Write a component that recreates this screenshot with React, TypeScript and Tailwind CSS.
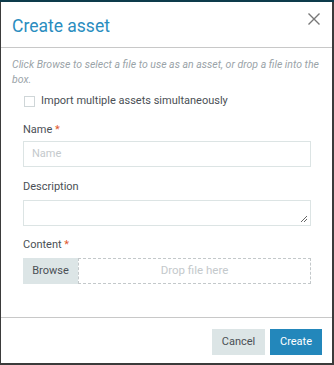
import React from "react";

export default function App() {
  return (
    <div className="w-[334px] h-[365px] bg-[#3b3b3b] flex flex-col" style={{ fontFamily: "Roboto, 'Noto Sans', sans-serif" }}>
      <div className="h-[2px] bg-[#0d3b4b] shrink-0" />
      <div className="ml-[1px] mr-[2px] h-[361px] bg-white flex flex-col">
        <div className="h-[46px] border-b border-[#c8c8c8] flex items-start justify-between pl-[11px] pr-[11px] shrink-0">
          <div className="text-[17.5px] leading-[22px] mt-[13px] text-[#2a8dc0]">Create asset</div>
          <svg width="14" height="14" viewBox="0 0 14 14" className="mt-[10px]">
            <path d="M1.5 1.5 L12.5 12.5 M12.5 1.5 L1.5 12.5" stroke="#777" strokeWidth="1.4" />
          </svg>
        </div>
        <div className="flex-1 pl-[11px] pr-[5px] pt-[9px]">
          <p className="italic text-[10.5px] leading-[15px] text-[#9aa3a8]">
            Click Browse to select a file to use as an asset, or drop a file into the box.
          </p>
          <label className="flex items-center mt-[7px] ml-[12px] gap-[6px]">
            <span className="w-[11px] h-[11px] border border-[#cfd6d8] bg-white" />
            <span className="text-[11px] leading-[14px] text-[#4a4f55]">Import multiple assets simultaneously</span>
          </label>
          <div className="ml-[11px] mr-[16px]">
            <div className="mt-[14px] text-[11px] leading-[16px] text-[#4a4f55]">
              Name <span className="text-[#e0582f]">*</span>
            </div>
            <div className="mt-[3px] h-[26px] border border-[#dce4e4] flex items-center px-[8px]">
              <span className="text-[11px] text-[#c4c9cc]">Name</span>
            </div>
            <div className="mt-[12px] text-[11px] leading-[16px] text-[#4a4f55]">Description</div>
            <div className="mt-[5px] h-[26px] border border-[#dce4e4] relative">
              <svg width="9" height="9" viewBox="0 0 9 9" className="absolute right-[2px] bottom-[2px]">
                <path d="M8 2 L2 8 M8 5 L5 8" stroke="#555" strokeWidth="0.9" />
              </svg>
            </div>
            <div className="mt-[11px] text-[11px] leading-[16px] text-[#4a4f55]">
              Content <span className="text-[#e0582f]">*</span>
            </div>
            <div className="mt-[5px] h-[26px] flex">
              <div className="w-[55px] bg-[#dce5e6] flex items-center justify-center text-[11px] text-[#4a4f55]">Browse</div>
              <div className="flex-1 border border-dashed border-[#c3c8ca] flex items-center justify-center text-[11.5px] text-[#c4c9cc]">
                Drop file here
              </div>
            </div>
          </div>
        </div>
        <div className="h-[46px] border-t border-[#c8c8c8] flex items-start justify-end gap-[5px] pr-[10px] pt-[11px] shrink-0">
          <button className="w-[53px] h-[26px] bg-[#dce5e6] text-[11px] text-[#4a4f55]">Cancel</button>
          <button className="w-[52px] h-[26px] bg-[#2387bb] text-[11px] text-white">Create</button>
        </div>
      </div>
    </div>
  );
}
